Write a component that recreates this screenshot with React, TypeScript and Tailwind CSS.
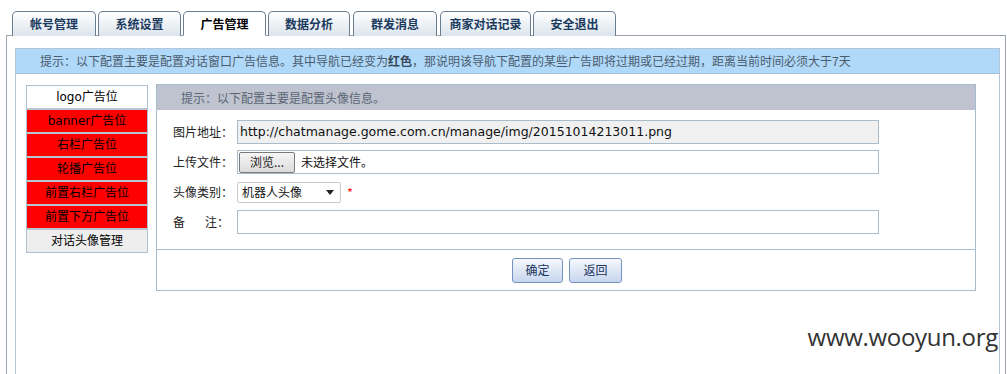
const TABS = ["帐号管理", "系统设置", "广告管理", "数据分析", "群发消息", "商家对话记录", "安全退出"];
const TAB_W = ["w-[84px]", "w-[83px]", "w-[83px]", "w-[82px]", "w-[84px]", "w-[91px]", "w-[83px]"];
const TAB_GAP = ["mr-[2px]", "mr-[2px]", "mr-[2px]", "mr-[3px]", "mr-[3px]", "mr-[2px]", ""];

const MENU = [
  { t: "logo广告位", bg: "bg-white" },
  { t: "banner广告位", bg: "bg-[#ff0000]" },
  { t: "右栏广告位", bg: "bg-[#ff0000]" },
  { t: "轮播广告位", bg: "bg-[#ff0000]" },
  { t: "前置右栏广告位", bg: "bg-[#ff0000]" },
  { t: "前置下方广告位", bg: "bg-[#ff0000]" },
  { t: "对话头像管理", bg: "bg-[#eeeeee]" },
];

const cjk = "font-['Noto_Sans_CJK_SC',sans-serif]";

function Label({ children }: { children: React.ReactNode }) {
  return <div className="w-[64px] shrink-0 text-[12px] text-[#222]">{children}</div>;
}

export default function App() {
  return (
    <div className={`relative h-[374px] overflow-hidden bg-white pt-[11px] ${cjk}`}>
      {/* tabs */}
      <div className="relative z-10 flex pl-[12px]">
        {TABS.map((t, i) => {
          const active = i === 2;
          return (
            <div
              key={t}
              className={`${TAB_W[i]} ${TAB_GAP[i]} flex h-[25px] items-center justify-center rounded-t-[5px] border border-[#6b7e91] text-[12px] font-bold ${
                active
                  ? "border-b-white bg-white text-black"
                  : "border-b-0 bg-gradient-to-b from-white to-[#dbe4ec] text-[#1a3a5e]"
              }`}
            >
              {t}
            </div>
          );
        })}
      </div>

      {/* outer box */}
      <div className="-mt-px ml-[6px] h-[360px] w-[1000px] border border-[#9ba6b1] pl-[8px] pr-[5px] pt-[12px]">
        <div className="h-[400px] border border-[#b3c5d6]">
          <div className="flex h-[25px] items-center border-b border-[#9ec0dc] bg-[#b0d8f8] pl-[24px] text-[12px] text-[#4b5c6e]">
            提示：以下配置主要是配置对话窗口广告信息。其中导航已经变为<b className="text-[#3a4a5c]">红色</b>，那说明该导航下配置的某些广告即将过期或已经过期，距离当前时间必须大于7天
          </div>

          <div className="flex items-start pl-[10px]">
            {/* left menu */}
            <div className="mt-[11px] w-[122px] border border-[#b0c0d0] bg-[#b8c4d0]">
              {MENU.map((m, i) => (
                <div
                  key={m.t}
                  className={`flex h-[22px] items-center justify-center font-['DejaVu_Sans','Noto_Sans_CJK_SC',sans-serif] text-[12px] text-black ${m.bg} ${
                    i < MENU.length - 1 ? "mb-[2px]" : ""
                  }`}
                >
                  {m.t}
                </div>
              ))}
            </div>

            {/* right panel */}
            <div className="ml-[8px] mt-[10px] w-[820px] border border-[#a9bccd]">
              <div className="flex h-[25px] items-center bg-[#bec3cf] pl-[24px] text-[12px] text-[#5b6674]">
                提示：以下配置主要是配置头像信息。
              </div>
              <div className="flex flex-col gap-[6px] pb-[15px] pl-[16px] pt-[10px]">
                <div className="flex h-[24px] items-center">
                  <Label>图片地址：</Label>
                  <div className="flex h-[24px] w-[642px] items-center border border-[#a8bccc] bg-[#f0f0f0] pl-[2px] font-['DejaVu_Sans',sans-serif] text-[12.5px] text-[#111]">
                    http://chatmanage.gome.com.cn/manage/img/20151014213011.png
                  </div>
                </div>
                <div className="flex h-[24px] items-center">
                  <Label>上传文件：</Label>
                  <div className="flex h-[24px] w-[642px] items-center gap-[6px] border border-[#a8bccc] bg-white pl-[1px]">
                    <div className="flex h-[21px] w-[56px] items-center justify-center rounded-[2px] border border-[#7a7a7a] bg-gradient-to-b from-[#f6f6f6] to-[#dcdcdc] text-[12px] text-[#222]">
                      浏览...
                    </div>
                    <span className="text-[12px] text-[#111]">未选择文件。</span>
                  </div>
                </div>
                <div className="flex h-[24px] items-center">
                  <Label>头像类别：</Label>
                  <div className="flex h-[21px] w-[104px] items-center justify-between rounded-[2px] border border-[#c4ccd4] bg-white pl-[4px] pr-[6px] text-[12px] text-[#111]">
                    <span>机器人头像</span>
                    <svg width="8" height="5" viewBox="0 0 8 5" aria-hidden>
                      <path d="M0 0h8L4 5z" fill="#222" />
                    </svg>
                  </div>
                  <span className="ml-[6px] text-[13px] leading-none text-[#ff2020]">*</span>
                </div>
                <div className="flex h-[24px] items-center">
                  <div className="flex w-[64px] shrink-0 text-[12px] text-[#222]">
                    <span>备</span>
                    <span className="ml-[20px]">注：</span>
                  </div>
                  <div className="h-[24px] w-[642px] border border-[#a8bccc] bg-white" />
                </div>
              </div>
              <div className="flex h-[41px] items-center justify-center gap-[6px] border-t border-[#a9bccd] pl-[2px]">
                <button className="h-[25px] w-[51px] rounded-[3px] border border-[#7392c0] bg-gradient-to-b from-[#f6f8fc] to-[#c7d6ee] text-[12px] text-[#1a3560]">
                  确定
                </button>
                <button className="h-[25px] w-[53px] rounded-[3px] border border-[#7392c0] bg-gradient-to-b from-[#f6f8fc] to-[#c7d6ee] text-[12px] text-[#1a3560]">
                  返回
                </button>
              </div>
            </div>
          </div>
        </div>
      </div>

      {/* watermark */}
      <div className="absolute right-[9px] top-[325px] font-['Open_Sans',sans-serif] text-[24px] leading-none tracking-[-0.3px] text-[#333]">
        www.wooyun.org
      </div>
    </div>
  );
}
